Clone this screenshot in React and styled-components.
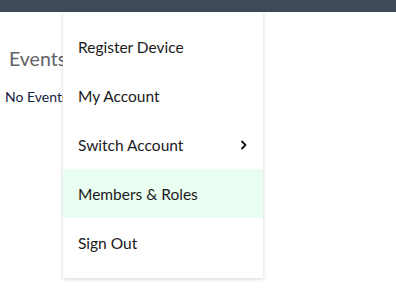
import React from 'react'
import styled, { createGlobalStyle } from 'styled-components'

const GlobalStyle = createGlobalStyle`
    body {
        margin: 0;
        background: #fff;
        font-family: Lato, "Noto Sans", sans-serif;
    }
`

const items = [
    { label: 'Register Device' },
    { label: 'My Account' },
    { label: 'Switch Account', submenu: true },
    { label: 'Members & Roles', active: true },
    { label: 'Sign Out' },
]

function Chevron() {
    return (
        <svg width="10" height="10" viewBox="0 0 10 10" fill="none">
            <path d="M3 1.5 L6.5 5 L3 8.5" stroke="#111" strokeWidth="1.8" strokeLinecap="round" strokeLinejoin="round" />
        </svg>
    )
}

export default function App() {
    return (
        <Page>
            <GlobalStyle />
            <TopBar />
            <Content>
                <Heading>Events</Heading>
                <Empty>No Events</Empty>
            </Content>
            <Menu>
                {items.map(item => (
                    <MenuItem key={item.label} active={item.active}>
                        <span>{item.label}</span>
                        {item.submenu && <Chevron />}
                    </MenuItem>
                ))}
            </Menu>
        </Page>
    )
}

const Page = styled.div`
    position: relative;
    width: 396px;
    height: 305px;
    overflow: hidden;
`

const TopBar = styled.div`
    height: 12px;
    background-color: #3e4a59;
`

const Content = styled.div`
    padding: 35px 0 0 5px;
`

const Heading = styled.h2`
    margin: 0 0 0 4px;
    font-size: 19.5px;
    font-weight: 400;
    color: #5f6366;
`

const Empty = styled.p`
    margin: 18px 0 0 0;
    font-size: 14px;
    color: #14213d;
`

const Menu = styled.ul`
    position: absolute;
    top: 12px;
    left: 63px;
    width: 200px;
    margin: 0;
    padding: 10px 0 11px;
    list-style: none;
    background: #fff;
    box-shadow: 0 1px 4px rgba(0, 0, 0, 0.18);
`

const MenuItem = styled.li`
    display: flex;
    align-items: center;
    justify-content: space-between;
    height: 49px;
    padding: 0 14px 0 15px;
    font-size: 15.5px;
    color: #1a1a1a;
    background-color: ${props => props.active ? '#eafdf1' : 'transparent'};
`
